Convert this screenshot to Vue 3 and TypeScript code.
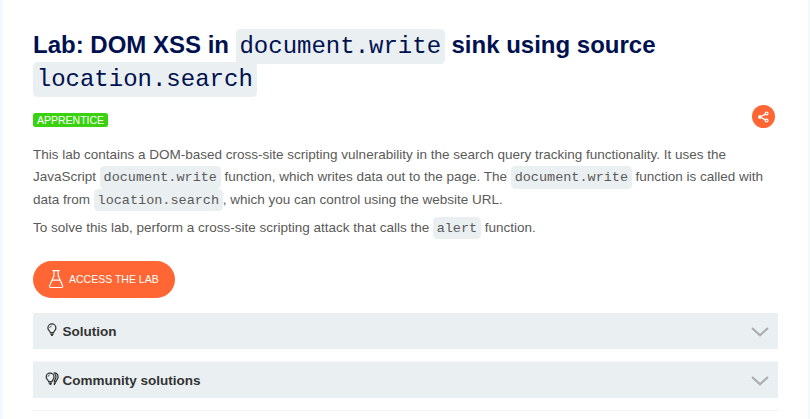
<script setup lang="ts">
interface Panel {
  title: string
  double: boolean
}

const panels: Panel[] = [
  { title: 'Solution', double: false },
  { title: 'Community solutions', double: true },
]
</script>

<template>
  <main class="page">
    <h1>Lab: DOM XSS in <code>document.write</code> sink using source <code>location.search</code></h1>
    <div class="meta">
      <span class="level">APPRENTICE</span>
      <button class="share" aria-label="Share">
        <svg width="23" height="23" viewBox="0 0 23 23" fill="none" stroke="#fff">
          <path d="M14.5 8.6 8 12l6.5 3.4" stroke-width="1.2" />
          <circle cx="7.9" cy="12" r="1.5" fill="#fff" stroke-width=".8" />
          <circle cx="14.6" cy="8.5" r="1.4" fill="#ff6633" stroke-width="1.2" />
          <circle cx="14.6" cy="15.6" r="1.4" fill="#ff6633" stroke-width="1.2" />
        </svg>
      </button>
    </div>
    <div class="description">
      <p>This lab contains a DOM-based cross-site scripting vulnerability in the search query tracking functionality. It uses the JavaScript <code>document.write</code> function, which writes data out to the page. The <code>document.write</code> function is called with data from <code>location.search</code>, which you can control using the website URL.</p>
      <p>To solve this lab, perform a cross-site scripting attack that calls the <code>alert</code> function.</p>
    </div>
    <button class="access">
      <svg width="16" height="20" viewBox="0 0 16 20" fill="none" stroke="#fff" stroke-width="1.2" stroke-linejoin="round">
        <path d="M4.8 1.6h6.4M6 1.7v5L1.7 16.4c-.5 1.4 0 2.1 1.2 2.1h10.4c1.2 0 1.7-.7 1.2-2.1L10.2 6.7v-5M4.7 11.2h6.8" stroke-linecap="round" />
      </svg>
      <span>ACCESS THE LAB</span>
    </button>
    <section v-for="panel in panels" :key="panel.title" class="panel">
      <svg class="bulb" width="15" height="14" viewBox="0 0 15 14" fill="none" stroke="#333332" stroke-width="1.25">
        <template v-if="panel.double">
          <path d="M3.6 9.6C3.6 8 1.2 7.4 1.2 4.9a3.9 3.9 0 0 1 7.8 0C9 7.4 7 8 7 9.6z" />
          <path d="M3.7 11.1H7M4.5 12.3h1.8" />
          <path d="M3 4.9c0-1.2.8-1.9 1.9-1.9" stroke-width=".8" />
          <path d="M8.6 1.1c2.5-.6 4.5 1.3 4.5 3.8S11 8 11 9.6H9M8.8 11.1H11M8.7 12.3h1.4M9 9.6c0-1.2 2-2.4 2-4.8 0-1.4-.5-2.4-1.4-3.2" />
        </template>
        <template v-else>
          <path d="M5.3 9.6C5.3 8 2.9 7.4 2.9 4.9a4 4 0 0 1 8 0c0 2.5-2.3 3.1-2.3 4.7z" />
          <path d="M5.3 11.1h3.3M6.1 12.3h1.8" />
          <path d="M4.8 4.9c0-1.2.8-1.9 1.9-1.9" stroke-width=".8" />
        </template>
      </svg>
      <strong>{{ panel.title }}</strong>
      <svg class="chevron" width="18" height="10" viewBox="0 0 18 10" fill="none" stroke="#aaabac" stroke-width="2">
        <path d="m1 1 8 7.3L17 1" />
      </svg>
    </section>
    <hr />
  </main>
</template>

<style>
body {
  background: #f0fafd;
}
</style>

<style scoped>
.page {
  box-sizing: border-box;
  height: 419px;
  margin: 0 2px 0 3px;
  padding: 28px 30px 0;
  overflow: hidden;
  background: #fff;
  color: #5a5a59;
  font: 13.5px/22.5px "Liberation Sans", Arial, sans-serif;
}
h1 {
  margin: 0;
  color: #00114f;
  font-size: 24px;
  line-height: 33px;
}
code {
  padding: 3.75px;
  border-radius: 4.5px;
  background: #eaeff2;
  font-family: "Liberation Mono", "Courier New", monospace;
  font-weight: 400;
  line-height: 1;
}
.meta {
  display: flex;
  justify-content: space-between;
  align-items: flex-start;
  height: 23px;
  margin-top: 11px;
  padding-right: 3px;
}
.level {
  height: 14px;
  margin-top: 8px;
  padding: 0 4px;
  border-radius: 2.5px;
  background: #38d30e;
  color: #fff;
  font-size: 10.5px;
  line-height: 14px;
}
.share {
  width: 23px;
  height: 23px;
  padding: 0;
  border: 0;
  border-radius: 50%;
  background: #ff6633;
}
.share svg {
  display: block;
}
.description {
  margin-top: 15.5px;
}
p {
  margin: 0 0 5.5px;
}
.access {
  display: flex;
  align-items: center;
  gap: 5px;
  width: 142px;
  height: 37px;
  margin: 22px 0 15px;
  padding: 0 0 2px 15px;
  border: 0;
  border-radius: 19px;
  background: #ff6633;
  color: #fff;
  font: 10.5px "Liberation Sans", Arial, sans-serif;
}
.panel {
  box-sizing: border-box;
  display: flex;
  align-items: center;
  height: 36px;
  margin-bottom: 13px;
  padding: 2px 9px 0 12px;
  background: #eaeff2;
  color: #333332;
}
.panel + .panel {
  margin-bottom: 12px;
  box-shadow: 0 -1px #f3f6f7;
}
.bulb {
  margin: 0 2.4px 5px 0;
}
.chevron {
  margin-left: auto;
}
hr {
  height: 1px;
  margin: 0;
  border: 0;
  background: #f0f2f3;
}
</style>
